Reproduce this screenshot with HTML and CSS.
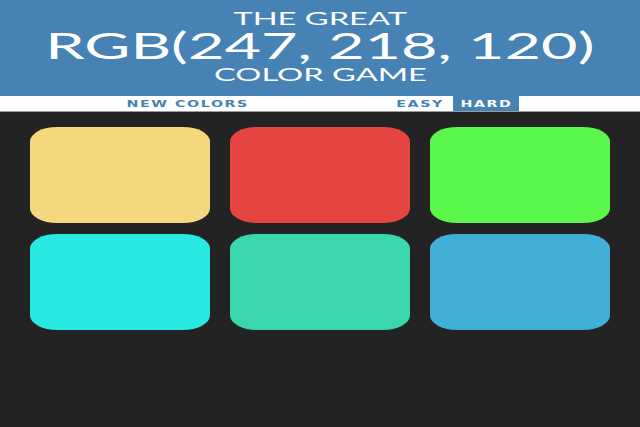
FILE: index.html
```html
<!DOCTYPE html>
<html>
<head>
<meta charset="utf-8">
<title>Color Game</title>
<link rel="stylesheet" href="styles.css">
</head>
<body>
<header class="header">
  <div class="line line-small"><span class="stretch stretch-small">The Great</span></div>
  <div class="line line-big"><span class="stretch" id="colorDisplay">RGB(247, 218, 120)</span></div>
  <div class="line line-small line-last"><span class="stretch stretch-small">Color Game</span></div>
</header>
<nav class="stripe">
  <button class="btn btn-new"><span class="btn-text">New Colors</span></button>
  <span class="message"></span>
  <button class="btn btn-easy"><span class="btn-text">Easy</span></button>
  <button class="btn btn-hard selected"><span class="btn-text">Hard</span></button>
</nav>
<main class="board">
  <div class="square sq-yellow"></div>
  <div class="square sq-red"></div>
  <div class="square sq-green"></div>
  <div class="square sq-cyan"></div>
  <div class="square sq-teal"></div>
  <div class="square sq-blue"></div>
</main>
</body>
</html>
```

FILE: styles.css
```css
html, body {
  margin: 0;
  padding: 0;
}
body {
  background: #232323;
  font-family: Lato, "Open Sans", sans-serif;
  width: 640px;
  height: 427px;
  overflow: hidden;
}
.header {
  background: #4682b4;
  color: #ffffff;
  height: 96px;
  display: flex;
  flex-direction: column;
  align-items: center;
  padding-top: 10px;
  box-sizing: border-box;
  text-transform: uppercase;
}
.line {
  text-align: center;
}
.line-small {
  font-size: 17px;
  line-height: 17px;
  height: 17px;
}
.line-big {
  font-size: 36px;
  line-height: 36px;
  height: 36px;
}
.line-last {
  margin-top: 3px;
}
.stretch {
  display: inline-block;
  transform: scaleX(1.75);
  transform-origin: center;
  white-space: nowrap;
}
.stretch-small {
  transform: scaleX(1.92);
}
.stripe {
  background: #ffffff;
  height: 15px;
  border-bottom: 1px solid #9a9a9a;
  display: flex;
  align-items: stretch;
  padding-left: 107px;
}
.btn {
  border: none;
  background: none;
  margin: 0;
  padding: 0;
  font-family: "DejaVu Sans", sans-serif;
  font-weight: 700;
  font-size: 9px;
  color: #4682b4;
  text-transform: uppercase;
  letter-spacing: 1px;
  display: flex;
  align-items: center;
  justify-content: center;
}
.btn-text {
  display: inline-block;
  transform: scaleX(1.58);
  margin-right: -1px;
}
.btn-new { width: 160px; }
.message { width: 120px; }
.btn-easy { width: 66px; }
.btn-hard { width: 66px; }
.selected {
  background: #4682b4;
  color: #ffffff;
}
.board {
  display: grid;
  grid-template-columns: repeat(3, 180px);
  column-gap: 20px;
  row-gap: 11px;
  justify-content: center;
  padding-top: 15px;
}
.square {
  height: 96px;
  border-radius: 15%;
}
.sq-yellow { background: rgb(245, 216, 126); }
.sq-red { background: rgb(229, 68, 64); }
.sq-green { background: rgb(90, 247, 75); }
.sq-cyan { background: rgb(40, 233, 226); }
.sq-teal { background: rgb(58, 214, 173); }
.sq-blue { background: rgb(65, 175, 215); }
```
